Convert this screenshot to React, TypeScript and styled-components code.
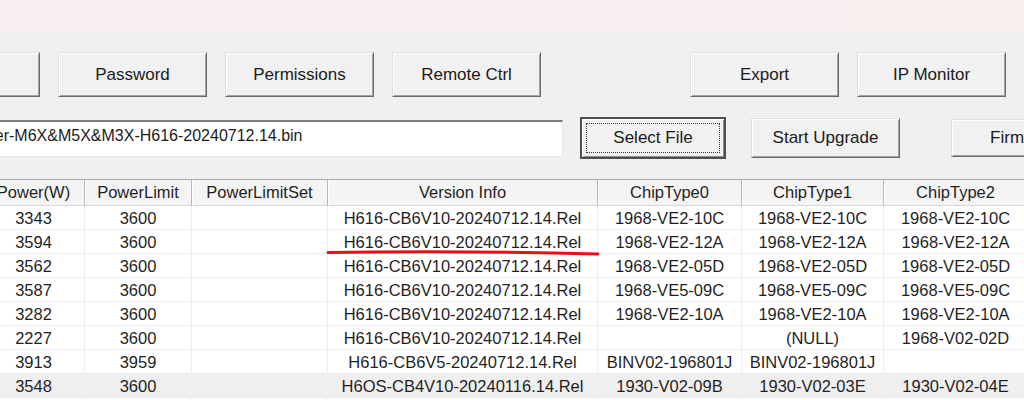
import React from "react";
import styled, { createGlobalStyle, css } from "styled-components";

const Global = createGlobalStyle`
  html, body { margin: 0; padding: 0; background: #f0f0f0; }
  body { font-family: "Liberation Sans", Arial, sans-serif; color: #1c1c1c; overflow: hidden; }
`;

const Screen = styled.div`
  position: relative;
  width: 1024px;
  height: 400px;
  overflow: hidden;
  background: #f0f0f0;
`;

const TitleBand = styled.div`
  height: 33px;
  background: linear-gradient(90deg, #f9eef2 0%, #f8eff1 60%, #f8f0ef 100%);
`;

const Body = styled.div`
  padding-top: 19px;
`;

const Toolbar = styled.div`
  display: flex;
  gap: 18px;
  margin-left: -109px;
`;

const classicFace = css`
  box-sizing: border-box;
  flex-shrink: 0;
  display: flex;
  align-items: center;
  justify-content: center;
  background: #f1f1f1;
  font-family: "Liberation Sans", Arial, sans-serif;
  font-size: 17px;
  color: #1a1a1a;
  border: 1px solid;
  border-color: #e0e0e0 #6a6a6a #6a6a6a #e0e0e0;
  box-shadow: inset 1px 1px 0 #ffffff, inset -1px -1px 0 #a3a3a3;
  padding: 0;
`;

const Button = styled.button<{ $w: number; $h: number; $gapBefore?: number }>`
  ${classicFace};
  width: ${(p) => p.$w}px;
  height: ${(p) => p.$h}px;
  margin-left: ${(p) => p.$gapBefore ?? 0}px;
`;

const DefaultButton = styled.button<{ $w: number; $h: number; $gapBefore?: number }>`
  ${classicFace};
  position: relative;
  width: ${(p) => p.$w}px;
  height: ${(p) => p.$h}px;
  margin-left: ${(p) => p.$gapBefore ?? 0}px;
  border: 2px solid #4e4e4e;
  box-shadow: inset 1px 1px 0 #ffffff, inset -1px -1px 0 #8a8a8a;
  &::after {
    content: "";
    position: absolute;
    inset: 4px;
    border: 1px dotted #3a3a3a;
  }
`;

const FileRow = styled.div`
  display: flex;
  align-items: center;
  margin-top: 20px;
  margin-left: -109px;
  height: 42px;
`;

const PathField = styled.div`
  box-sizing: border-box;
  flex-shrink: 0;
  width: 672px;
  height: 37px;
  background: #ffffff;
  border-top: 2px solid #7d7d7d;
  border-left: 2px solid #7d7d7d;
  border-right: 1px solid #e6e6e6;
  border-bottom: 1px solid #e6e6e6;
  padding: 5px 0 0 76px;
  font-size: 16px;
  color: #1c1c1c;
  white-space: nowrap;
  overflow: hidden;
`;

const Grid = styled.div<{ $cols: string }>`
  display: grid;
  grid-template-columns: ${(p) => p.$cols};
  margin-top: 20px;
  margin-left: -17px;
  width: max-content;
  background: #ffffff;
  border-top: 1px solid #a8a8a8;
`;

const HeadCell = styled.div`
  box-sizing: border-box;
  height: 26px;
  display: flex;
  align-items: center;
  justify-content: center;
  background: #f4f4f4;
  border-right: 1px solid #b8b8b8;
  border-bottom: 1px solid #d6d6d6;
  box-shadow: inset 1px 0 0 #ffffff;
  font-size: 16.5px;
  color: #1f1f1f;
  white-space: nowrap;
  overflow: hidden;
`;

const Cell = styled.div<{ $selected?: boolean }>`
  box-sizing: border-box;
  height: 24px;
  display: flex;
  align-items: center;
  justify-content: center;
  background: ${(p) => (p.$selected ? "#efefef" : "#ffffff")};
  border-right: 1px solid ${(p) => (p.$selected ? "#efefef" : "#eeeeee")};
  border-bottom: 1px solid #ececec;
  font-size: 16.5px;
  color: #1f1f1f;
  white-space: nowrap;
  overflow: hidden;
  padding-top: 1px;
`;

const Annotation = styled.svg`
  position: absolute;
  left: 0;
  top: 0;
  width: 1024px;
  height: 400px;
  pointer-events: none;
`;

const columns = [
  { title: "Power(W)", w: 102 },
  { title: "PowerLimit", w: 107 },
  { title: "PowerLimitSet", w: 136 },
  { title: "Version Info", w: 270 },
  { title: "ChipType0", w: 144 },
  { title: "ChipType1", w: 142 },
  { title: "ChipType2", w: 144 },
  { title: "", w: 120 },
];

const V10 = "H616-CB6V10-20240712.14.Rel";

const rows: string[][] = [
  ["3343", "3600", "", V10, "1968-VE2-10C", "1968-VE2-10C", "1968-VE2-10C", ""],
  ["3594", "3600", "", V10, "1968-VE2-12A", "1968-VE2-12A", "1968-VE2-12A", ""],
  ["3562", "3600", "", V10, "1968-VE2-05D", "1968-VE2-05D", "1968-VE2-05D", ""],
  ["3587", "3600", "", V10, "1968-VE5-09C", "1968-VE5-09C", "1968-VE5-09C", ""],
  ["3282", "3600", "", V10, "1968-VE2-10A", "1968-VE2-10A", "1968-VE2-10A", ""],
  ["2227", "3600", "", V10, "", "(NULL)", "1968-V02-02D", ""],
  ["3913", "3959", "", "H616-CB6V5-20240712.14.Rel", "BINV02-196801J", "BINV02-196801J", "", ""],
  ["3548", "3600", "", "H6OS-CB4V10-20240116.14.Rel", "1930-V02-09B", "1930-V02-03E", "1930-V02-04E", ""],
  ["", "", "", "", "", "", "", ""],
];

const SELECTED = 7;

export default function App() {
  const cols = columns.map((c) => `${c.w}px`).join(" ");
  return (
    <Screen>
      <Global />
      <TitleBand />
      <Body>
        <Toolbar>
          <Button $w={149} $h={45} aria-label="More" />
          <Button $w={149} $h={45}>Password</Button>
          <Button $w={149} $h={45}>Permissions</Button>
          <Button $w={149} $h={45}>Remote Ctrl</Button>
          <Button $w={149} $h={45} $gapBefore={131}>Export</Button>
          <Button $w={149} $h={45}>IP Monitor</Button>
        </Toolbar>
        <FileRow>
          <PathField>Miner-M6X&amp;M5X&amp;M3X-H616-20240712.14.bin</PathField>
          <DefaultButton $w={146} $h={42} $gapBefore={17}>Select File</DefaultButton>
          <Button $w={149} $h={40} $gapBefore={25}>Start Upgrade</Button>
          <Button $w={149} $h={38} $gapBefore={51}>Firmware</Button>
        </FileRow>
        <Grid $cols={cols}>
          {columns.map((c, i) => (
            <HeadCell key={`h${i}`}>{c.title}</HeadCell>
          ))}
          {rows.map((r, ri) =>
            r.map((v, ci) => (
              <Cell key={`${ri}-${ci}`} $selected={ri === SELECTED}>
                {v}
              </Cell>
            ))
          )}
        </Grid>
      </Body>
      <Annotation viewBox="0 0 1024 400">
        <path
          d="M328 252.6 Q 450 250.2 598 254"
          fill="none"
          stroke="#e3111b"
          strokeWidth="3"
          strokeLinecap="round"
        />
      </Annotation>
    </Screen>
  );
}
